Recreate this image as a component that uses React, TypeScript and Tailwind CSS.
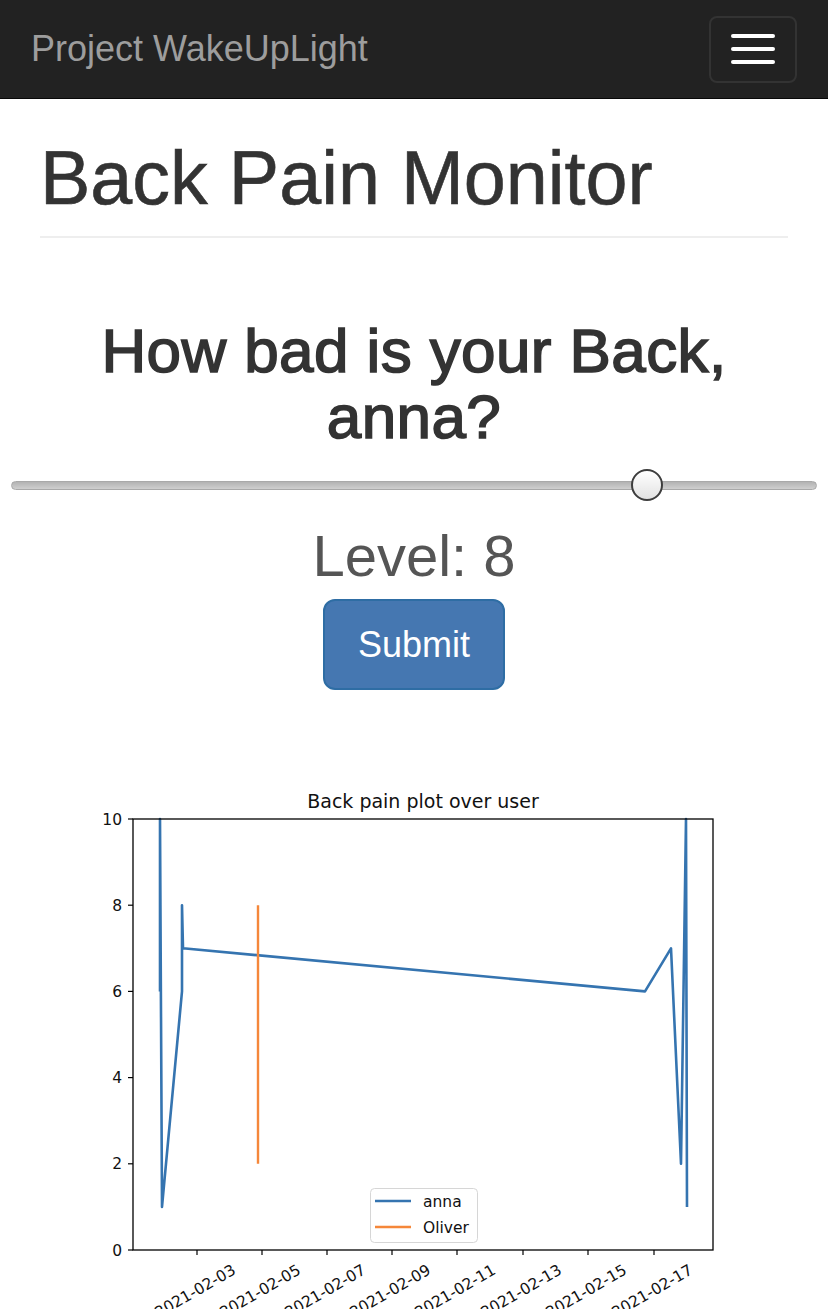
import React from "react"

const ticksY = [0, 2, 4, 6, 8, 10]
const ticksX = [
    { x: 197, label: "2021-02-03" },
    { x: 262, label: "2021-02-05" },
    { x: 327, label: "2021-02-07" },
    { x: 392, label: "2021-02-09" },
    { x: 457, label: "2021-02-11" },
    { x: 523, label: "2021-02-13" },
    { x: 588, label: "2021-02-15" },
    { x: 654, label: "2021-02-17" },
]

const yPos = (v: number) => 1250 - v * 43.1
const plotFont = "DejaVu Sans, sans-serif"

// anna's data points: page x, pain value
const anna: [number, number][] = [
    [160, 6], [160, 10], [162, 1], [182, 6], [182, 8], [183, 7],
    [645, 6], [671, 7], [681, 2], [686, 10], [687, 1],
]

const PainChart = () => {
    const annaPath = anna.map(([x, v], i) => `${i ? "L" : "M"}${x} ${yPos(v)}`).join(" ")
    return (
        <svg width="828" height="540" viewBox="0 780 828 540" className="block">
            <text x="423" y="808" textAnchor="middle" fontSize="19" fill="#111" fontFamily={plotFont}>
                Back pain plot over user
            </text>

            {/* lines */}
            <path d={annaPath} fill="none" stroke="#3574b0" strokeWidth="2.6" strokeLinejoin="round" />
            <path d={`M258 ${yPos(8)} L258 ${yPos(2)}`} stroke="#f5873a" strokeWidth="2.4" />

            {/* axes */}
            <rect x="133" y="819" width="580" height="431" fill="none" stroke="#000" strokeWidth="1.3" />
            {ticksY.map(v => (
                <g key={v}>
                    <line x1="128" x2="133" y1={yPos(v)} y2={yPos(v)} stroke="#000" strokeWidth="1.2" />
                    <text x="122" y={yPos(v) + 5.5} textAnchor="end" fontSize="15.5" fill="#111" fontFamily={plotFont}>{v}</text>
                </g>
            ))}
            {ticksX.map(t => (
                <g key={t.label}>
                    <line x1={t.x} x2={t.x} y1="1250" y2="1255" stroke="#000" strokeWidth="1.2" />
                    <text transform={`translate(${t.x - 2},1291) rotate(-30)`} textAnchor="middle" dy="0.35em" fontSize="15.5" fill="#111" fontFamily={plotFont}>
                        {t.label}
                    </text>
                </g>
            ))}

            {/* legend */}
            <rect x="370.5" y="1188.5" width="107" height="54" rx="4" fill="#fff" fillOpacity="0.8" stroke="#d6d6d6" />
            <line x1="375" x2="411" y1="1201" y2="1201" stroke="#3574b0" strokeWidth="2.6" />
            <text x="423" y="1207" fontSize="15.5" fill="#111" fontFamily={plotFont}>anna</text>
            <line x1="375" x2="411" y1="1227" y2="1227" stroke="#f5873a" strokeWidth="2.6" />
            <text x="423" y="1233" fontSize="15.5" fill="#111" fontFamily={plotFont}>Oliver</text>
        </svg>
    )
}

const App = () => {
    const level = 8
    return (
        <div className="min-h-[1309px] bg-white font-['Liberation_Sans',Arial,sans-serif]">
            <nav className="h-[99px] bg-[#222] border-b border-[#080808] flex items-center justify-between pl-[31px] pr-[31px]">
                <span className="text-[36px] leading-none text-[#9d9d9d]">Project WakeUpLight</span>
                <button className="w-[88px] h-[67px] border-2 border-[#333] rounded-[8px] flex flex-col items-center justify-center gap-[9px]">
                    <span className="block w-[44px] h-[4px] bg-white rounded-sm" />
                    <span className="block w-[44px] h-[4px] bg-white rounded-sm" />
                    <span className="block w-[44px] h-[4px] bg-white rounded-sm" />
                </button>
            </nav>

            <div className="px-[40px]">
                <h1 className="mt-[38px] text-[75.5px] leading-[82px] text-[#333] pb-[17px] border-b-2 border-[#eee] [-webkit-text-stroke:0.6px_#333]">
                    Back Pain Monitor
                </h1>
            </div>

            <h2 className="mt-[80px] px-[30px] text-center text-[62px] leading-[66px] tracking-[0.4px] text-[#333] [-webkit-text-stroke:1.6px_#333]">
                How bad is your Back, anna?
            </h2>

            {/* slider */}
            <div className="relative mx-[11px] mt-[18px] h-[34px] flex items-center">
                <div className="w-full h-[9px] rounded-full bg-gradient-to-b from-[#b3b3b3] to-[#cfcfcf] border border-[#a9a9a9]" />
                <div className="absolute left-[620px] top-[1px] w-[32px] h-[32px] rounded-full border-2 border-[#3d3d3d] bg-gradient-to-b from-white to-[#e2e2e2]" />
            </div>

            <div className="mt-[22px] text-center text-[58px] leading-[64px] text-[#555]">Level: {level}</div>

            <div className="flex justify-center mt-[11px]">
                <button className="w-[182px] h-[91px] rounded-[12px] bg-[#4577b1] border-2 border-[#2e6da4] text-white text-[36px]">
                    Submit
                </button>
            </div>

            <div className="mt-[90px]">
                <PainChart />
            </div>
        </div>
    )
}

export default App
